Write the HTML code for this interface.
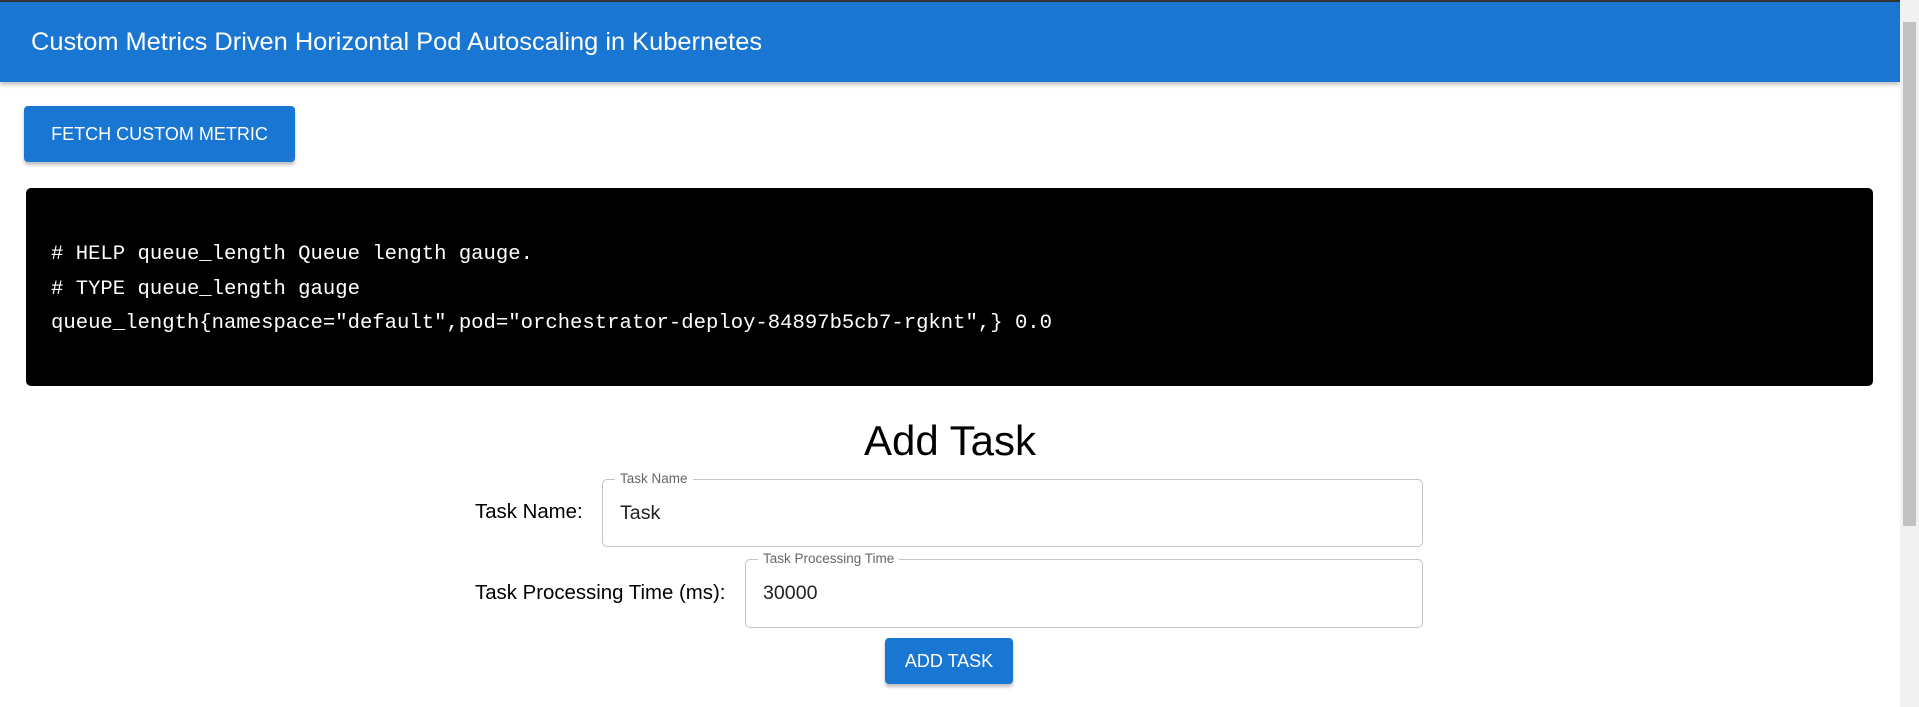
<!DOCTYPE html>
<html><head><meta charset="utf-8"><style>
*{box-sizing:border-box;margin:0;padding:0}
body{width:1919px;height:707px;overflow:hidden;background:#fff;font-family:"Liberation Sans",Arial,sans-serif;position:relative}
.top{position:absolute;left:0;top:0;width:1900px;height:3px;background:#333}
.hdr{position:absolute;left:0;top:2px;width:1900px;height:80px;background:#1976d2;box-shadow:0 2px 5px rgba(0,0,0,.3);color:#fff;font-size:25.4px;line-height:80px;padding-left:31px}
.sb{position:absolute;left:1900px;top:0;width:19px;height:707px;background:#f1f1f1}
.sb div{position:absolute;left:3px;top:22px;width:13px;height:504px;background:#c1c1c1}
.btn{position:absolute;background:#1976d2;color:#fff;border-radius:4px;text-align:center;box-shadow:0 3px 3px rgba(0,0,0,.25);font-size:18px}
.code{position:absolute;left:26px;top:188px;width:1847px;height:198px;background:#000;border-radius:5px;color:#fff;font-family:"Liberation Mono",monospace;font-size:20.6px;line-height:34.5px;padding:50px 0 0 25px}
.lbl{position:absolute;font-size:20.4px;color:#000}
.inp{position:absolute;border:1px solid #c4c4c4;border-radius:5px}
.inp .l{position:absolute;top:-9px;left:12px;background:#fff;padding:0 5px;font-size:13.5px;color:#666;line-height:16px}
.inp .v{position:absolute;left:17px;top:22px;font-size:19.6px;color:#222}
</style></head><body>
<div class="top"></div>
<div class="hdr">Custom Metrics Driven Horizontal Pod Autoscaling in Kubernetes</div>
<div class="sb"><div></div></div>
<div class="btn" style="left:24px;top:106px;width:271px;height:56px;line-height:56px">FETCH CUSTOM METRIC</div>
<div class="code"># HELP queue_length Queue length gauge.<br># TYPE queue_length gauge<br>queue_length{namespace="default",pod="orchestrator-deploy-84897b5cb7-rgknt",} 0.0</div>
<div style="position:absolute;left:750px;width:400px;top:414px;text-align:center;font-size:42px;line-height:54px">Add Task</div>
<div class="lbl" style="left:475px;top:501px">Task Name:</div>
<div class="inp" style="left:602px;top:479px;width:821px;height:68px"><span class="l">Task Name</span><span class="v">Task</span></div>
<div class="lbl" style="left:475px;top:582px">Task Processing Time (ms):</div>
<div class="inp" style="left:745px;top:559px;width:678px;height:69px"><span class="l">Task Processing Time</span><span class="v">30000</span></div>
<div class="btn" style="left:885px;top:638px;width:128px;height:46px;line-height:46px">ADD TASK</div>
</body></html>
